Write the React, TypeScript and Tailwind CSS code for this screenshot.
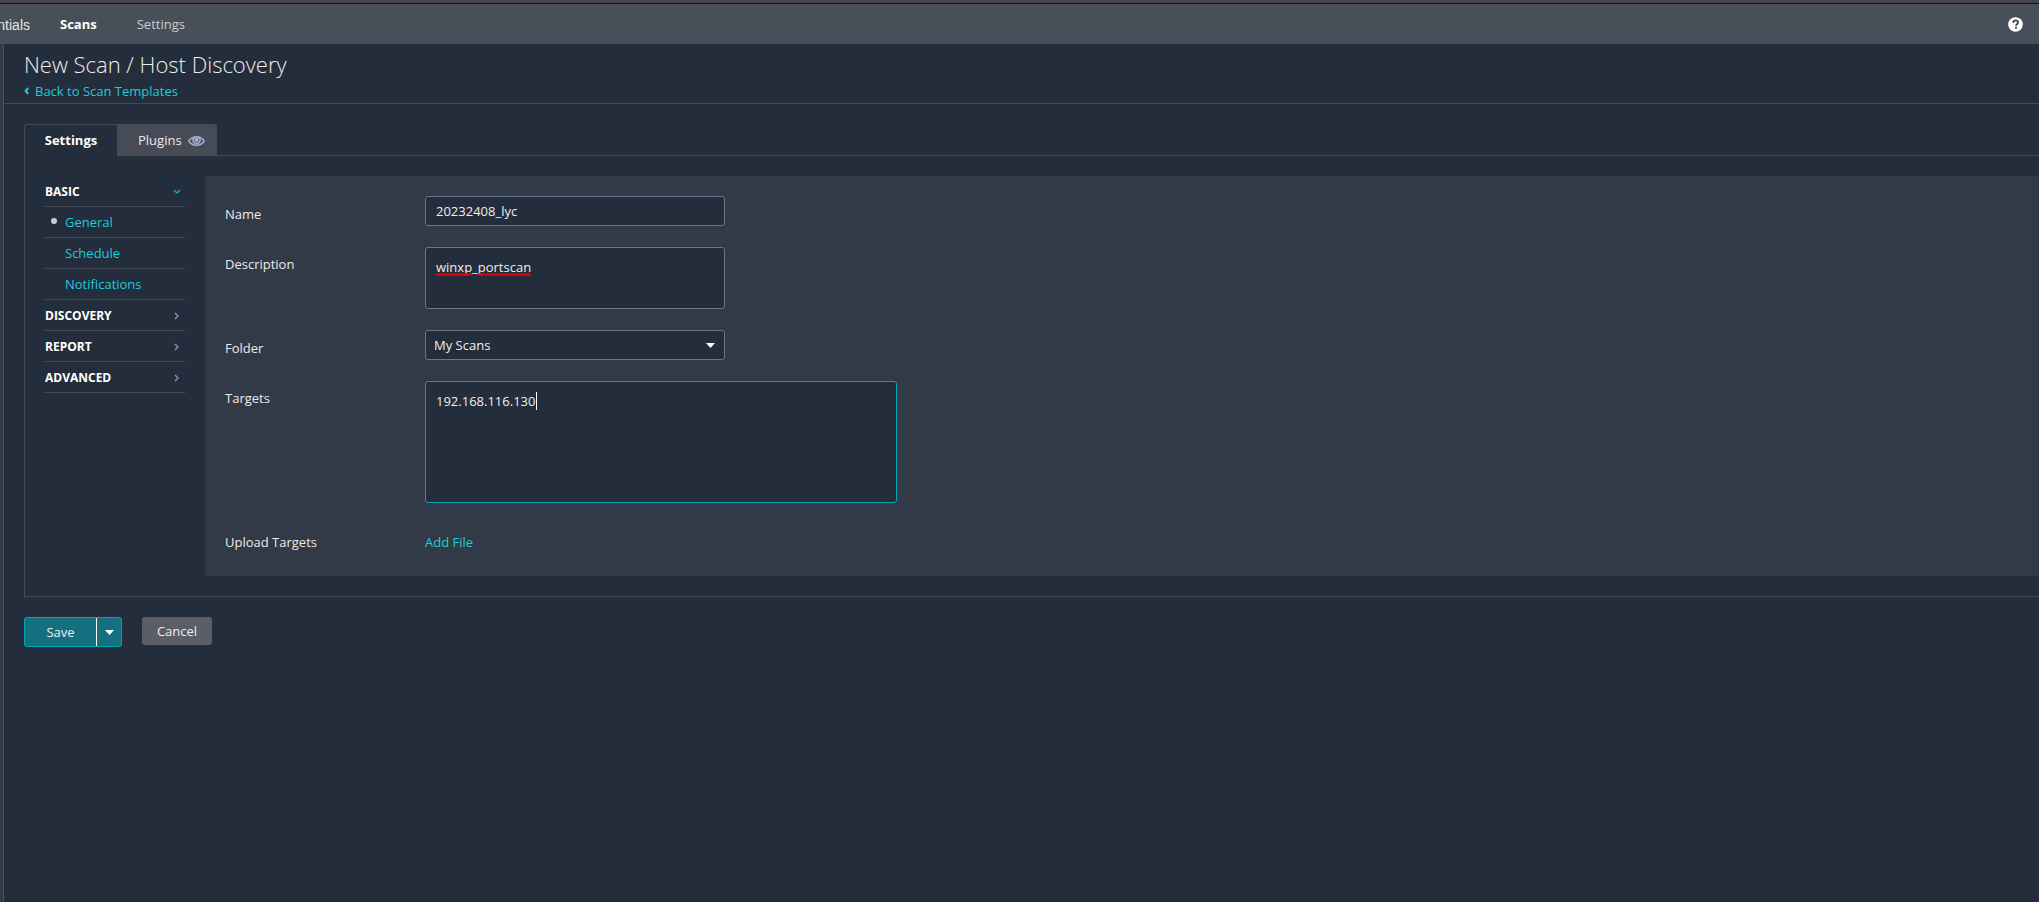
import type { ReactNode } from "react";

const line = "border-[#474b56]";
const field = "block rounded-[3px] border border-[#66768f] bg-[#242d3b] text-[13px] text-[#eeeeee] outline-none";

function Caret({ className }: { className?: string }) {
  return (
    <svg width="9" height="5" viewBox="0 0 9 5" className={className} aria-hidden="true">
      <path d="M0 0h9L4.5 5z" fill="#fff" />
    </svg>
  );
}

function Eye() {
  return (
    <svg width="17" height="10" viewBox="0 0 17 10" aria-hidden="true">
      <path d="M.7 5C2.700 2.100 5.300.8 8.500.8s5.800 1.300 7.800 4.200c-2 2.900-4.600 4.200-7.800 4.200S2.700 7.900.7 5z" fill="none" stroke="#a3aed3" strokeWidth="1.500" />
      <path d="M4.700 1.500C4 3 4 4.500 4.600 6c.8 1.700 2.200 2.400 3.900 2.400s3.100-.7 3.900-2.400c.6-1.500.6-3-.1-4.500z" fill="#a3aed3" />
      <path d="M6.300 2.600c-.5 1.800 0 3.800 2.200 3.900 2.200-.1 2.700-2.100 2.200-3.900" fill="none" stroke="#474b56" strokeWidth=".9" />
    </svg>
  );
}

function Chevron({ open }: { open?: boolean }) {
  return open ? (
    <svg width="8" height="5" viewBox="0 0 8 5" className="mr-1" aria-hidden="true">
      <path d="M1 1l3 3 3-3" fill="none" stroke="#1aa5b3" strokeWidth="1.500" />
    </svg>
  ) : (
    <svg width="5" height="8" viewBox="0 0 5 8" className="mr-[6px]" aria-hidden="true">
      <path d="M1 1l3 3-3 3" fill="none" stroke="#8290b2" strokeWidth="1.500" />
    </svg>
  );
}

function Squiggle({ className, id }: { className: string; id: string }) {
  return (
    <svg height="3" className={className} aria-hidden="true">
      <defs>
        <pattern id={id} width="4" height="3" patternUnits="userSpaceOnUse">
          <path d="M-2 .5L0 2.500 2 .5 4 2.500 6 .5" fill="none" stroke="#f00" strokeWidth="1.400" />
        </pattern>
      </defs>
      <rect width="100%" height="3" fill={`url(#${id})`} />
    </svg>
  );
}

function Section({ title, open, children }: { title: string; open?: boolean; children?: ReactNode }) {
  return (
    <li>
      <button type="button" className={`flex h-[31px] w-full items-center justify-between border-b ${line} pt-px text-[12px] font-bold text-white`}>
        {title}
        <Chevron open={open} />
      </button>
      {children}
    </li>
  );
}

function SubLink({ label, active }: { label: string; active?: boolean }) {
  return (
    <li className={`flex h-[31px] items-center border-b ${line} pt-0.5`}>
      <span className="flex w-5 justify-center pb-1 pr-0.5">
        {active && <span className="size-[6px] rounded-full bg-[#cccccc]" />}
      </span>
      <a href="#" className="text-[#1dcbdb]">{label}</a>
    </li>
  );
}

function Row({ label, htmlFor, tall, children }: { label: string; htmlFor: string; tall?: boolean; children: ReactNode }) {
  return (
    <div className="flex items-start">
      <label htmlFor={htmlFor} className={`w-[200px] shrink-0 leading-5 ${tall ? "pt-[7px]" : "pt-2"}`}>{label}</label>
      {children}
    </div>
  );
}

export default function App() {
  return (
    <div className="flex min-h-screen flex-col overflow-hidden bg-[#242d3b] font-['Open_Sans',sans-serif] text-[13px] text-[#eaeaea]">
      <div className="h-1 border-b border-[#0f1116] bg-[#45444f]" />
      <header className="flex h-10 items-center bg-[#474f58] pr-4">
        <div className="flex w-[30px] justify-end overflow-hidden pt-0.5 font-['Liberation_Sans',sans-serif] text-[14px] text-[#e6e6e6]">ntials</div>
        <nav className="flex grow items-center gap-10 pl-[30px] pt-0.5">
          <a href="#" className="font-bold text-white">Scans</a>
          <a href="#" className="text-[#cccccc]">Settings</a>
        </nav>
        <button type="button" aria-label="Help" className="flex">
          <svg width="15" height="15" viewBox="0 0 512 512" aria-hidden="true">
            <circle cx="256" cy="256" r="250" fill="#fff" />
            <path d="M176 196c8-52 40-80 84-80 50 0 82 30 82 74 0 60-66 58-66 108" fill="none" stroke="#3a414b" strokeWidth="62" />
            <rect x="240" y="336" width="66" height="62" fill="#3a414b" />
          </svg>
        </button>
      </header>

      <div className="flex grow">
        <div className="w-1 shrink-0 border-r border-[#4d515c] bg-[#343944]" />
        <div className="min-w-0 grow">
          <div className={`h-[60px] border-b ${line} pl-5 pt-1`}>
            <h1 className="text-[22px] font-light leading-8 text-[#eeeeee]">New Scan / Host Discovery</h1>
            <a href="#" className="flex items-center gap-[6px] pt-px leading-5 text-[#1dcbdb]">
              <svg width="5" height="8" viewBox="0 0 5 8" aria-hidden="true">
                <path d="M4.200 1L1.600 4l2.600 3" fill="none" stroke="#1dcbdb" strokeWidth="2" />
              </svg>
              Back to Scan Templates
            </a>
          </div>

          <main className="pl-5 pt-5">
            <div className="flex">
              <button type="button" className={`h-8 w-[93px] rounded-tl-[3px] border-l border-t ${line} text-[13px] font-bold text-white`}>Settings</button>
              <button type="button" className="flex h-8 w-[100px] items-center gap-[6px] rounded-tr-[3px] bg-[#474b56] pl-[21px] pt-px text-[13px]">
                Plugins
                <Eye />
              </button>
              <div className={`grow border-b ${line}`} />
            </div>
            <div className={`flex border-b border-l ${line} pb-5 pl-5 pt-5`}>
              <ul className="w-[140px] shrink-0">
                <Section title="BASIC" open>
                  <ul>
                    <SubLink label="General" active />
                    <SubLink label="Schedule" />
                    <SubLink label="Notifications" />
                  </ul>
                </Section>
                <Section title="DISCOVERY" />
                <Section title="REPORT" />
                <Section title="ADVANCED" />
              </ul>
              <form className="ml-5 flex grow flex-col gap-[21px] bg-[#333a47] p-5">
                <Row label="Name" htmlFor="name">
                  <input id="name" defaultValue="20232408_lyc" className={`${field} h-[30px] w-[300px] px-[10px]`} />
                </Row>
                <Row label="Description" htmlFor="description" tall>
                  <div className="relative">
                    <textarea id="description" spellCheck={false} defaultValue="winxp_portscan" className={`${field} h-[62px] w-[300px] resize-none px-[10px] py-[9px] leading-5`} />
                    <Squiggle id="squiggle-a" className="absolute left-[11px] top-[26px] w-9" />
                    <Squiggle id="squiggle-b" className="absolute left-[53px] top-[26px] w-[53px]" />
                  </div>
                </Row>
                <Row label="Folder" htmlFor="folder">
                  <div className="relative">
                    <select id="folder" className={`${field} h-[30px] w-[300px] appearance-none px-2 pt-px`}>
                      <option>My Scans</option>
                    </select>
                    <Caret className="pointer-events-none absolute right-[10px] top-[13px]" />
                  </div>
                </Row>
                <Row label="Targets" htmlFor="targets" tall>
                  <div className="relative">
                    <textarea id="targets" spellCheck={false} defaultValue="192.168.116.130" className="block h-[122px] w-[472px] resize-none rounded-[3px] border border-[#00a5b5] bg-[#242d3b] px-[10px] py-[9px] text-[13px] leading-5 text-[#eeeeee] outline-none" />
                    <span className="absolute left-[111px] top-[11px] h-[18px] w-px bg-white" />
                  </div>
                </Row>
                <Row label="Upload Targets" htmlFor="upload">
                  <button id="upload" type="button" className="h-8 pb-1 pt-2 leading-5 text-[#1dcbdb]">Add File</button>
                </Row>
              </form>
            </div>

            <div className="flex items-start pt-5">
              <div className="flex h-[30px] rounded-[3px] border border-[#00a5b5] bg-[#14707f]">
                <button type="button" className="w-[71px] pt-0.5 text-[#eeeeee]">Save</button>
                <button type="button" aria-label="More save options" className="flex w-[25px] items-center justify-center border-l border-white pt-px">
                  <Caret />
                </button>
              </div>
              <button type="button" className="ml-5 h-7 w-[70px] rounded-[3px] bg-[#5b5e67] pt-px text-[#eeeeee]">Cancel</button>
            </div>
          </main>
        </div>
      </div>
    </div>
  );
}
